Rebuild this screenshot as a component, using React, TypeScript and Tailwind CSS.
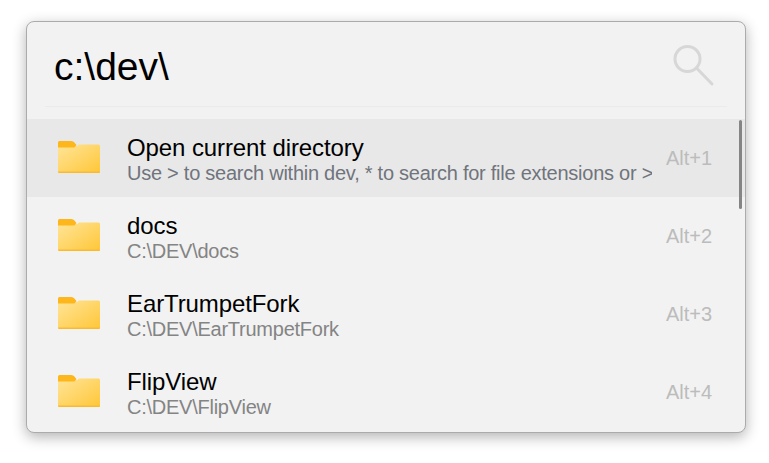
const rows = [
  { title: "Open current directory", sub: "Use > to search within dev, * to search for file extensions or >* to combine", key: "Alt+1", active: true },
  { title: "docs", sub: "C:\\DEV\\docs", key: "Alt+2" },
  { title: "EarTrumpetFork", sub: "C:\\DEV\\EarTrumpetFork", key: "Alt+3" },
  { title: "FlipView", sub: "C:\\DEV\\FlipView", key: "Alt+4" },
];

function Folder() {
  return (
    <svg width="43" height="34" viewBox="0 0 43 34" className="shrink-0">
      <defs>
        <linearGradient id="fg" x1="0" y1="0" x2="1" y2="1">
          <stop offset="0" stopColor="#ffe498" />
          <stop offset="1" stopColor="#ffc738" />
        </linearGradient>
      </defs>
      <path d="M1 6H20L22 4.5H41.5A1.5 1.5 0 0 1 43 6V31.5A1.5 1.5 0 0 1 41.5 33H2.5A1.5 1.5 0 0 1 1 31.5Z" fill="url(#fg)" />
      <path d="M1 2.5A1.5 1.5 0 0 1 2.5 1H14c1.8 0 2.6.8 3.6 1.8L19.5 5 17.5 7.5H1Z" fill="#fdb71c" />
      <path d="M1 31.5H43A1.5 1.5 0 0 1 41.5 33H2.5A1.5 1.5 0 0 1 1 31.5Z" fill="#fbb92c" />
    </svg>
  );
}

export default function App() {
  return (
    <div className="h-[463px] w-[769px] bg-white pt-[21px] pl-[26px] font-['Liberation_Sans',Arial,sans-serif]">
      <div className="relative h-[412px] w-[720px] overflow-hidden rounded-[8px] border border-[#ababab] bg-[#f2f2f2] shadow-[0_4px_14px_rgba(0,0,0,0.3)]">
        <div className="mx-[18px] flex h-[85px] items-center justify-between border-b border-[#ebebeb]">
          <span className="mt-[5px] pl-[9px] text-[39px] leading-none text-black">c:\dev\</span>
          <svg width="44" height="46" viewBox="0 0 44 46" className="mr-[12px] mt-[-1px]" fill="none" stroke="#d7d7d7" strokeWidth="3">
            <circle cx="16.5" cy="18" r="12.5" />
            <path d="M25.5 27L41 43" strokeLinecap="round" />
          </svg>
        </div>
        <div className="mt-[12px]">
          {rows.map((r) => (
            <div key={r.key} className={`flex h-[78px] items-center ${r.active ? "bg-[#e8e8e8]" : ""}`}>
              <div className="ml-[30px] mr-[27px] mt-[-2px] flex">
                <Folder />
              </div>
              <div className="mt-[1px] w-[525px] overflow-hidden whitespace-nowrap">
                <div className="text-[24px] leading-[30px] tracking-[-0.1px] text-black">{r.title}</div>
                <div className={`mt-[-1px] text-[20px] leading-[22px] tracking-[-0.25px] ${r.active ? "text-[#70747d]" : "text-[#848484]"}`}>{r.sub}</div>
              </div>
              <div className="ml-[14px] text-[20px] leading-none text-[#bcbcbc]">{r.key}</div>
            </div>
          ))}
        </div>
        <div className="absolute right-[3px] top-[98px] h-[89px] w-[3px] rounded-full bg-[#858585]" />
      </div>
    </div>
  );
}
